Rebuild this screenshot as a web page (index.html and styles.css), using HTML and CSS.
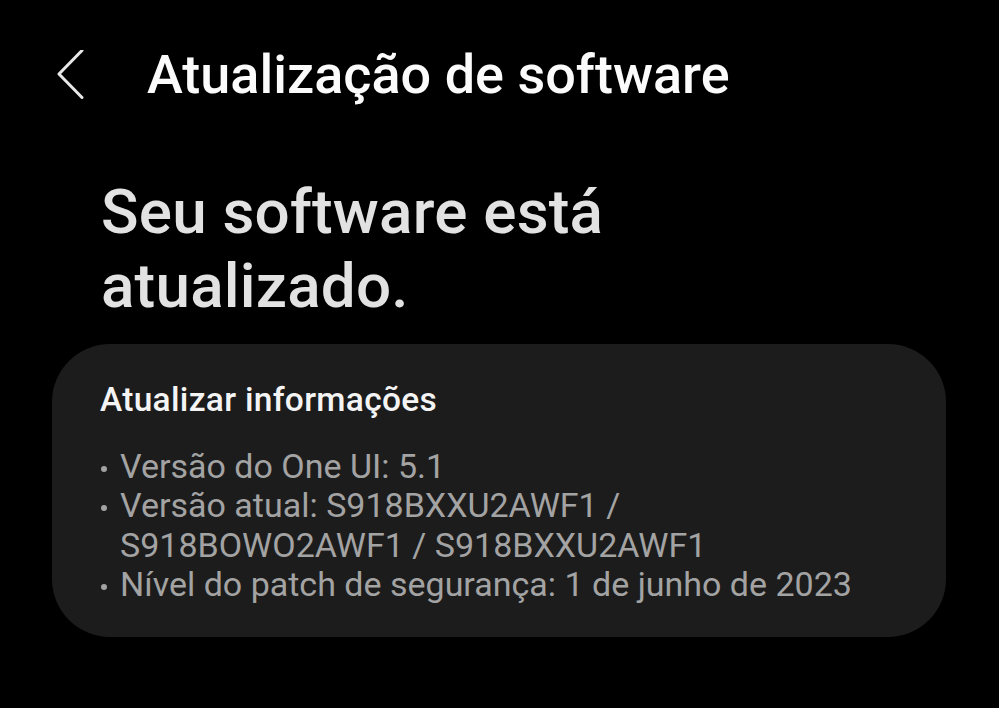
FILE: index.html
```html
<!DOCTYPE html>
<html lang="pt">
<head>
<meta charset="utf-8">
<link rel="stylesheet" href="styles.css">
</head>
<body>
<div class="screen">
  <header class="appbar">
    <svg class="back" width="30" height="50" viewBox="0 0 30 50" aria-hidden="true">
      <polyline points="26,0.5 3,24 26,47.5" fill="none" stroke="#e8e8e8" stroke-width="3" stroke-linecap="round" stroke-linejoin="round"/>
    </svg>
    <h1 class="appbar-title">Atualização de software</h1>
  </header>
  <h2 class="status">Seu software está<br>atualizado.</h2>
  <section class="card">
    <h3 class="card-title">Atualizar informações</h3>
    <ul class="info">
      <li>Versão do One UI: 5.1</li>
      <li>Versão atual: S918BXXU2AWF1 /<br>S918BOWO2AWF1 / S918BXXU2AWF1</li>
      <li>Nível do patch de segurança: 1 de junho de 2023</li>
    </ul>
  </section>
</div>
</body>
</html>
```
FILE: styles.css
```css
html, body {
  margin: 0;
  padding: 0;
  background: #000;
}
body {
  font-family: Roboto, "Noto Sans", "Liberation Sans", sans-serif;
  width: 999px;
  height: 708px;
  overflow: hidden;
}
.screen {
  padding: 0 53px 0 52px;
}
.appbar {
  display: flex;
  align-items: center;
  height: 48px;
  padding-top: 51px;
  padding-left: 4px;
}
.back {
  flex: none;
  margin-right: 61px;
}
.appbar-title {
  margin: 0;
  font-size: 54px;
  font-weight: 500;
  color: #fbfbfb;
  letter-spacing: 0;
  line-height: 48px;
  white-space: nowrap;
}
.status {
  margin: 0;
  padding: 76px 0 0 49px;
  font-size: 62px;
  font-weight: 500;
  color: #e2e2e2;
  line-height: 74px;
  letter-spacing: 0.2px;
}
.card {
  margin-top: 21px;
  height: 293px;
  box-sizing: border-box;
  background: #1c1c1c;
  border-radius: 58px;
  padding: 36px 40px 0 48px;
}
.card-title {
  margin: 0;
  font-size: 33.5px;
  font-weight: 500;
  color: #f4f4f4;
  line-height: 40px;
  letter-spacing: 0.3px;
}
.info {
  list-style: none;
  margin: 27px 0 0;
  padding: 0;
  font-size: 34px;
  line-height: 39.3px;
  color: #a3a3a3;
  letter-spacing: 0;
}
.info li {
  position: relative;
  padding-left: 20px;
}
.info li::before {
  content: "";
  position: absolute;
  left: 1px;
  top: 19px;
  width: 6px;
  height: 6px;
  border-radius: 50%;
  background: #a3a3a3;
}
```
